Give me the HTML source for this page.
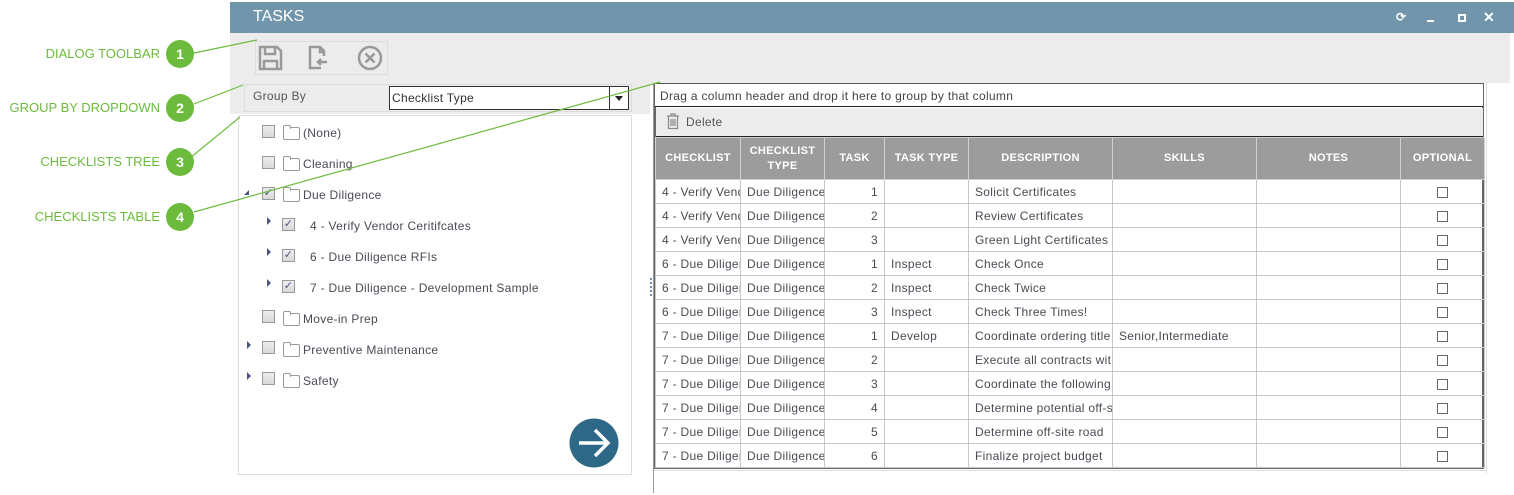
<!DOCTYPE html>
<html><head><meta charset="utf-8"><style>
*{box-sizing:border-box;margin:0;padding:0}
body{width:1514px;height:495px;background:#fff;position:relative;overflow:hidden;font-family:"Liberation Sans",sans-serif;font-size:12px;color:#4a4a55;letter-spacing:.3px}
.a{position:absolute}
.lbl{color:#6cbb3c;font-size:13px;text-align:right;width:160px;left:0;letter-spacing:0}
.num{width:28px;height:28px;border-radius:50%;background:#6cbb3c;color:#fff;font-weight:bold;font-size:14px;text-align:center;line-height:28px;left:166px;letter-spacing:0}
.cb{width:13px;height:13px;border:1px solid #999;background:linear-gradient(#eee,#d8d8d8);text-align:center}
.fold{width:17px;height:13px;border:1px solid #999;border-radius:2px;background:#fff}
.fold:before{content:"";position:absolute;left:-1px;top:-3px;width:6px;height:3px;border:1px solid #999;border-bottom:none;border-radius:2px 2px 0 0;background:#fff}
.tri{width:0;height:0;border-top:4px solid transparent;border-bottom:4px solid transparent;border-left:4px solid #4a5580}
table{border-collapse:collapse;table-layout:fixed}
td,th{border:1px solid #c8c8c8;height:24px;padding:0 6px;white-space:nowrap;overflow:hidden;font-weight:normal}
th{background:#9c9c9c;color:#fff;font-weight:bold;font-size:11px;height:42px;text-align:center;border-color:#d0d0d0;line-height:15px}
td.r{text-align:right}
.ck{display:inline-block;width:11px;height:11px;border:1px solid #666;background:#fff;vertical-align:middle}
</style></head><body>
<div class="a" style="left:230px;top:2px;width:1284px;height:31px;background:#7196ab"></div>
<div class="a" style="left:253px;top:8px;color:#fff;font-size:16px;letter-spacing:0">TASKS</div>
<div class="a" style="left:1396px;top:10px;color:#fff;font-size:12px;font-weight:bold">⟳</div>
<div class="a" style="left:1427px;top:20px;width:7px;height:2px;background:#fff"></div>
<div class="a" style="left:1458px;top:14px;width:8px;height:8px;border:2px solid #fff"></div>
<div class="a" style="left:1483px;top:9px;color:#fff;font-size:14px;font-weight:bold">✕</div>
<div class="a" style="left:230px;top:33px;width:1280px;height:50px;background:#ececec"></div>
<div class="a" style="left:255px;top:41px;width:133px;height:34px;border:1px solid #ddd"></div>
<svg class="a" style="left:257px;top:44px" width="130" height="28">
<g fill="none" stroke="#999" stroke-width="2.5">
<path d="M3 3h17l4 4v18H3z"/><path d="M8 3v7h10V3"/><path d="M7 25v-8h13v8"/>
<path d="M64 24H53V3h10l4 4v5"/><path d="M63 3v5h4"/><path d="M70 18h-9m3-3-3 3 3 3"/>
<circle cx="113" cy="14" r="11"/><path d="M108.5 9.5l9 9m0-9-9 9"/>
</g></svg>
<div class="a" style="left:230px;top:83px;width:420px;height:31px;background:#ececec"></div>
<div class="a" style="left:244px;top:84px;width:388px;height:28px;border:1px solid #ddd"></div>
<div class="a" style="left:253px;top:89px;color:#555">Group By</div>
<div class="a" style="left:389px;top:86px;width:240px;height:24px;border:1px solid #333;background:#fff"></div>
<div class="a" style="left:392px;top:91px;color:#333">Checklist Type</div>
<div class="a" style="left:609px;top:86px;width:1px;height:24px;background:#333"></div>
<div class="a" style="left:615px;top:96px;border-left:4px solid transparent;border-right:4px solid transparent;border-top:5px solid #222"></div>
<div class="a" style="left:238px;top:115px;width:394px;height:360px;border:1px solid #ddd"></div>
<div class="a cb" style="left:262px;top:125px"></div><div class="a fold" style="left:283px;top:127px"></div><div class="a" style="left:303px;top:126px">(None)</div>
<div class="a cb" style="left:262px;top:156px"></div><div class="a fold" style="left:283px;top:158px"></div><div class="a" style="left:303px;top:157px">Cleaning</div>
<div class="a" style="left:244px;top:190px;border-left:5px solid transparent;border-bottom:5px solid #4a5580"></div>
<div class="a cb" style="left:262px;top:187px;color:#4a5580;font-size:11px;line-height:11px">✓</div><div class="a fold" style="left:283px;top:189px"></div><div class="a" style="left:303px;top:188px">Due Diligence</div>
<div class="a tri" style="left:267px;top:217px"></div><div class="a cb" style="left:282px;top:218px;color:#4a5580;font-size:11px;line-height:11px">✓</div><div class="a" style="left:310px;top:219px">4 - Verify Vendor Ceritifcates</div>
<div class="a tri" style="left:267px;top:248px"></div><div class="a cb" style="left:282px;top:249px;color:#4a5580;font-size:11px;line-height:11px">✓</div><div class="a" style="left:310px;top:250px">6 - Due Diligence RFIs</div>
<div class="a tri" style="left:267px;top:279px"></div><div class="a cb" style="left:282px;top:280px;color:#4a5580;font-size:11px;line-height:11px">✓</div><div class="a" style="left:310px;top:281px">7 - Due Diligence - Development Sample</div>
<div class="a cb" style="left:262px;top:310px"></div><div class="a fold" style="left:283px;top:313px"></div><div class="a" style="left:303px;top:312px">Move-in Prep</div>
<div class="a tri" style="left:247px;top:341px"></div><div class="a cb" style="left:262px;top:341px"></div><div class="a fold" style="left:283px;top:344px"></div><div class="a" style="left:303px;top:343px">Preventive Maintenance</div>
<div class="a tri" style="left:247px;top:372px"></div><div class="a cb" style="left:262px;top:372px"></div><div class="a fold" style="left:283px;top:375px"></div><div class="a" style="left:303px;top:374px">Safety</div>
<svg class="a" style="left:569px;top:418px" width="50" height="50"><circle cx="25" cy="25" r="24.5" fill="#2e6887"/><path d="M10 25h28M26 12l13 13-13 13" fill="none" stroke="#fff" stroke-width="3.5"/></svg>
<div class="a" style="left:653px;top:83px;width:1px;height:410px;background:#999"></div>
<div class="a" style="left:650px;top:278px;width:2px;height:18px;border-left:2px dotted #6f8fb0"></div>
<div class="a" style="left:1486px;top:83px;width:1px;height:390px;background:#ddd"></div>
<div class="a" style="left:654px;top:470px;width:832px;height:1px;background:#ddd"></div>
<div class="a" style="left:654px;top:83px;width:830px;height:386px;border:2px solid #666;border-top:1px solid #555"></div>
<div class="a" style="left:655px;top:84px;width:828px;height:23px;background:#fff;border-bottom:1px solid #222"></div>
<div class="a" style="left:660px;top:89px;color:#444">Drag a column header and drop it here to group by that column</div>
<div class="a" style="left:656px;top:108px;width:827px;height:29px;background:#ececec;border-bottom:1px solid #222"></div>
<svg class="a" style="left:666px;top:113px" width="14" height="17"><g fill="none" stroke="#888" stroke-width="1.2"><path d="M1 3h12M5 3V1h4v2M2.5 3.5v12h9v-12M5 6v7M7 6v7M9 6v7"/></g></svg>
<div class="a" style="left:686px;top:115px;color:#555">Delete</div>
<table class="a" style="left:655px;top:137px;width:829px">
<colgroup><col style="width:85px"><col style="width:84px"><col style="width:60px"><col style="width:84px"><col style="width:144px"><col style="width:144px"><col style="width:144px"><col style="width:84px"></colgroup>
<tr><th>CHECKLIST</th><th>CHECKLIST<br>TYPE</th><th>TASK</th><th>TASK TYPE</th><th>DESCRIPTION</th><th>SKILLS</th><th>NOTES</th><th>OPTIONAL</th></tr>
<tr><td>4 - Verify Vendor</td><td>Due Diligence</td><td class="r">1</td><td></td><td>Solicit Certificates</td><td></td><td></td><td style="text-align:center"><span class="ck"></span></td></tr>
<tr><td>4 - Verify Vendor</td><td>Due Diligence</td><td class="r">2</td><td></td><td>Review Certificates</td><td></td><td></td><td style="text-align:center"><span class="ck"></span></td></tr>
<tr><td>4 - Verify Vendor</td><td>Due Diligence</td><td class="r">3</td><td></td><td>Green Light Certificates</td><td></td><td></td><td style="text-align:center"><span class="ck"></span></td></tr>
<tr><td>6 - Due Diligence</td><td>Due Diligence</td><td class="r">1</td><td>Inspect</td><td>Check Once</td><td></td><td></td><td style="text-align:center"><span class="ck"></span></td></tr>
<tr><td>6 - Due Diligence</td><td>Due Diligence</td><td class="r">2</td><td>Inspect</td><td>Check Twice</td><td></td><td></td><td style="text-align:center"><span class="ck"></span></td></tr>
<tr><td>6 - Due Diligence</td><td>Due Diligence</td><td class="r">3</td><td>Inspect</td><td>Check Three Times!</td><td></td><td></td><td style="text-align:center"><span class="ck"></span></td></tr>
<tr><td>7 - Due Diligence</td><td>Due Diligence</td><td class="r">1</td><td>Develop</td><td>Coordinate ordering title</td><td>Senior,Intermediate</td><td></td><td style="text-align:center"><span class="ck"></span></td></tr>
<tr><td>7 - Due Diligence</td><td>Due Diligence</td><td class="r">2</td><td></td><td>Execute all contracts with</td><td></td><td></td><td style="text-align:center"><span class="ck"></span></td></tr>
<tr><td>7 - Due Diligence</td><td>Due Diligence</td><td class="r">3</td><td></td><td>Coordinate the following</td><td></td><td></td><td style="text-align:center"><span class="ck"></span></td></tr>
<tr><td>7 - Due Diligence</td><td>Due Diligence</td><td class="r">4</td><td></td><td>Determine potential off-site</td><td></td><td></td><td style="text-align:center"><span class="ck"></span></td></tr>
<tr><td>7 - Due Diligence</td><td>Due Diligence</td><td class="r">5</td><td></td><td>Determine off-site road</td><td></td><td></td><td style="text-align:center"><span class="ck"></span></td></tr>
<tr><td>7 - Due Diligence</td><td>Due Diligence</td><td class="r">6</td><td></td><td>Finalize project budget</td><td></td><td></td><td style="text-align:center"><span class="ck"></span></td></tr>
</table>
<svg class="a" style="left:0;top:0" width="1514" height="495"><g stroke="#6cbb3c" stroke-width="1.2" fill="none">
<path d="M194 53L257 40"/><path d="M194 104L243 85"/><path d="M190 158L240 117"/><path d="M194 212L660 82"/></g></svg>
<div class="a lbl" style="top:46px">DIALOG TOOLBAR</div><div class="a num" style="top:40px">1</div>
<div class="a lbl" style="top:100px">GROUP BY DROPDOWN</div><div class="a num" style="top:94px">2</div>
<div class="a lbl" style="top:154px">CHECKLISTS TREE</div><div class="a num" style="top:148px">3</div>
<div class="a lbl" style="top:209px">CHECKLISTS TABLE</div><div class="a num" style="top:203px">4</div>
</body></html>
